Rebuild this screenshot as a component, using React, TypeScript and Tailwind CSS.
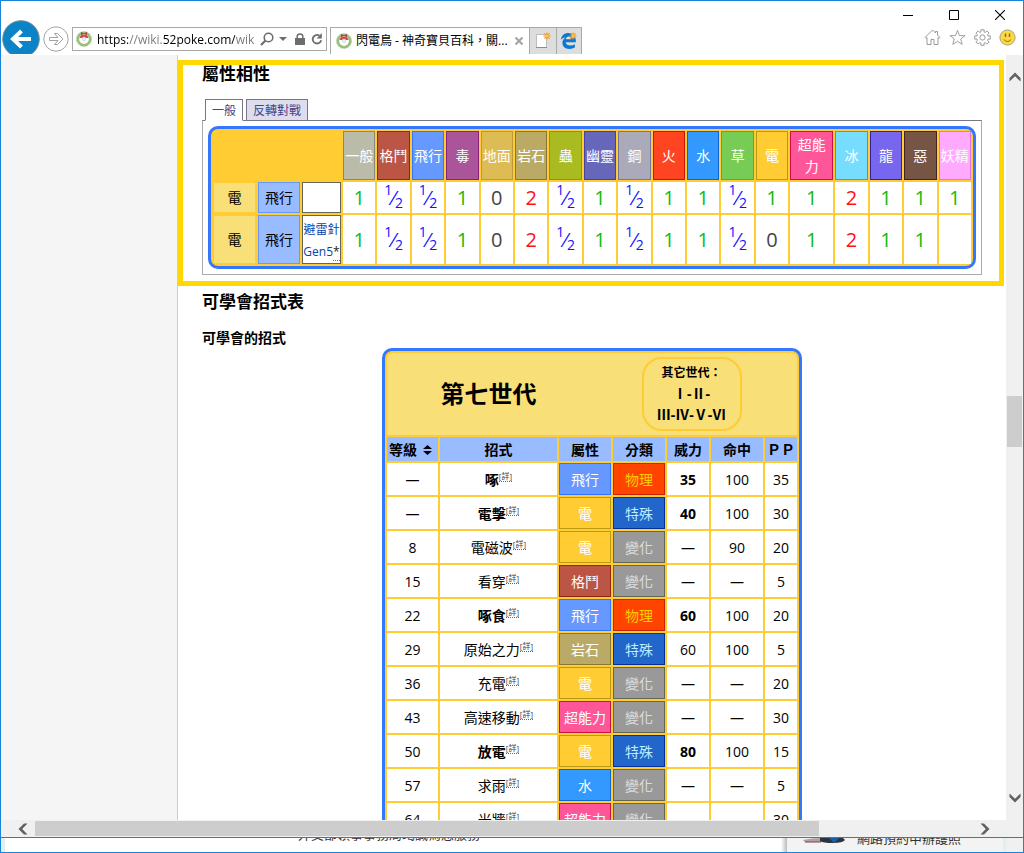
import React, { useState } from 'react'
import clsx from 'clsx'

const TYPE_STYLES: Record<string, string> = {
  一般: 'bg-[#bbbbaa] border-[#888877]',
  格鬥: 'bg-[#bb5544] border-[#992211]',
  飛行: 'bg-[#6699ff] border-[#3377ff]',
  毒: 'bg-[#aa5599] border-[#882277]',
  地面: 'bg-[#ddbb55] border-[#bb9933]',
  岩石: 'bg-[#bbaa66] border-[#887733]',
  蟲: 'bg-[#aabb22] border-[#889911]',
  幽靈: 'bg-[#6666bb] border-[#444499]',
  鋼: 'bg-[#aaaabb] border-[#777799]',
  火: 'bg-[#ff4422] border-[#cc1100]',
  水: 'bg-[#3399ff] border-[#1166cc]',
  草: 'bg-[#77cc55] border-[#44bb11]',
  電: 'bg-[#ffcc33] border-[#bb9911]',
  超能力: 'bg-[#ff5599] border-[#cc1144]',
  冰: 'bg-[#77ddff] border-[#22aadd]',
  龍: 'bg-[#7766ee] border-[#332299]',
  惡: 'bg-[#775544] border-[#442222]',
  妖精: 'bg-[#ffaaff] border-[#dd77dd]',
}

const CATEGORY_STYLES: Record<string, string> = {
  物理: 'bg-[#ff4400] border-[#cc2200] text-[#ffcc00]',
  特殊: 'bg-[#2266cc] border-[#003399] text-[#bbeeff]',
  變化: 'bg-[#999999] border-[#666655] text-[#dddddd]',
}

const TYPES = Object.keys(TYPE_STYLES)

const MATCHUP = ['1', '½', '½', '1', '0', '2', '½', '1', '½', '1', '1', '½', '1', '1', '2', '1', '1', '1']
const MATCHUP_ROD = ['1', '½', '½', '1', '0', '2', '½', '1', '½', '1', '1', '½', '0', '1', '2', '1', '1', '']

interface Move {
  level: string
  name: string
  type: string
  category: string
  power: string
  accuracy: string
  pp: number
  stab?: boolean
}

const MOVES: Move[] = [
  { level: '—', name: '啄', type: '飛行', category: '物理', power: '35', accuracy: '100', pp: 35, stab: true },
  { level: '—', name: '電擊', type: '電', category: '特殊', power: '40', accuracy: '100', pp: 30, stab: true },
  { level: '8', name: '電磁波', type: '電', category: '變化', power: '—', accuracy: '90', pp: 20 },
  { level: '15', name: '看穿', type: '格鬥', category: '變化', power: '—', accuracy: '—', pp: 5 },
  { level: '22', name: '啄食', type: '飛行', category: '物理', power: '60', accuracy: '100', pp: 20, stab: true },
  { level: '29', name: '原始之力', type: '岩石', category: '特殊', power: '60', accuracy: '100', pp: 5 },
  { level: '36', name: '充電', type: '電', category: '變化', power: '—', accuracy: '—', pp: 20 },
  { level: '43', name: '高速移動', type: '超能力', category: '變化', power: '—', accuracy: '—', pp: 30 },
  { level: '50', name: '放電', type: '電', category: '特殊', power: '80', accuracy: '100', pp: 15, stab: true },
  { level: '57', name: '求雨', type: '水', category: '變化', power: '—', accuracy: '—', pp: 5 },
  { level: '64', name: '光牆', type: '超能力', category: '變化', power: '—', accuracy: '—', pp: 30 },
]

// Outline of a cog with eight square teeth
const cogPath = () => {
  const pts: string[] = []
  for (let i = 0; i < 8; i++) {
    const a = (i * Math.PI) / 4
    const corners: [number, number][] = [
      [-0.27, 5.8],
      [-0.21, 7.9],
      [0.21, 7.9],
      [0.27, 5.8],
    ]
    corners.forEach(([d, r]) => {
      pts.push(`${(8.5 + r * Math.cos(a + d)).toFixed(2)} ${(8.5 + r * Math.sin(a + d)).toFixed(2)}`)
    })
  }
  return `M${pts.join('L')}Z`
}

function WreathIcon() {
  return (
    <svg width="16" height="16" viewBox="0 0 16 16" className="shrink-0">
      <circle cx="8" cy="8" r="6.2" fill="#fff" stroke="#97bf7c" strokeWidth="2.6" />
      <circle cx="8" cy="8" r="7.5" fill="none" stroke="#b4d09c" strokeWidth="1" strokeDasharray="2 1.4" />
      <path d="M3.4 6.8Q4.4 3.4 8 3.4T12.600 6.8Q11 7.200 9.800 7A2 2 0 0 0 6.200 7Q5 7.200 3.400 6.800Z" fill="#cf4a4e" />
      <path d="M5 1l3 1.600L11 1v3L8 3 5 4Z" fill="#b8383c" />
      <circle cx="8" cy="8" r="1.5" fill="#fff" stroke="#b9b9b9" strokeWidth=".6" />
    </svg>
  )
}

function Spark({ x, y }: { x: number; y: number }) {
  return (
    <g transform={`translate(${x} ${y})`} stroke="#f29a1f" strokeWidth="1.2">
      <path d="M0-3.6V3.6M-3.6 0H3.6M-2.6-2.6L2.6 2.6M2.6-2.6L-2.6 2.6" />
      <circle r="1.5" fill="#ffc65c" stroke="none" />
    </g>
  )
}

function Chevron({ rotate, className }: { rotate: string; className?: string }) {
  return (
    <svg width="12" height="12" viewBox="0 0 12 12" className={clsx(rotate, className)}>
      <path d="M0.5 7L6 1.5 11.5 7V10.5L6 5.2 0.5 10.5Z" fill="#606060" />
    </svg>
  )
}

function BrowserBar() {
  const [url, setUrl] = useState('https://wiki.52poke.com/wik')

  return (
    <header className="flex h-[54px] shrink-0 gap-[3px] pb-px pl-px">
      <div className="flex items-end gap-[3px]">
        <button aria-label="Back">
          <svg width="38" height="34" viewBox="0 0 38 34" className="block">
            <circle cx="19" cy="19" r="18.3" fill="#0a84c6" stroke="#7d8a92" strokeWidth="1" />
            <path d="M29 19H12M19.5 11L11 19l8.500 8" fill="none" stroke="#fff" strokeWidth="4" />
          </svg>
        </button>
        <button aria-label="Forward" className="mb-0.5">
          <svg width="26" height="26" viewBox="0 0 26 26" className="block" fill="#fff" stroke="#a3a3a3">
            <circle cx="13" cy="13" r="12.2" />
            <path d="M6.500 11.500H15L11.500 7.500H14.500L20 13l-5.500 5.500H11.500L15 14.500H6.500Z" />
          </svg>
        </button>
      </div>

      <div className="flex flex-1 flex-col">
        {/* Window controls */}
        <div className="flex h-[26px] justify-end pt-0.5">
          <button aria-label="Minimize" className="flex w-[46px] items-center justify-center">
            <svg width="10" height="10" viewBox="0 0 10 10"><path d="M0 5.500H10" stroke="#000" /></svg>
          </button>
          <button aria-label="Maximize" className="flex w-[46px] items-center justify-center">
            <svg width="10" height="10" viewBox="0 0 10 10"><path d="M.5.5h9v9h-9Z" fill="none" stroke="#000" /></svg>
          </button>
          <button aria-label="Close" className="flex w-[46px] items-center justify-center">
            <svg width="10" height="10" viewBox="0 0 10 10"><path d="M0 0L10 10M10 0L0 10" stroke="#000" strokeWidth="1.100" /></svg>
          </button>
        </div>

        <div className="flex flex-1 items-start gap-[3px]">
          {/* Address */}
          <div className="flex h-6 w-[255px] items-center border border-[#a9a9a9] px-[3px]">
            <WreathIcon />
            <input
              aria-label="Address"
              value={url}
              onChange={(e) => setUrl(e.target.value)}
              className="ml-[5px] w-[164px] bg-[linear-gradient(90deg,#000_31px,#777_31px_65px,#000_65px_138px,#777_138px)] bg-clip-text pt-px text-[12px] text-transparent outline-none"
            />
            <button aria-label="Search">
              <svg width="14" height="14" viewBox="0 0 14 14" fill="none" stroke="#6d6d6d">
                <circle cx="8.500" cy="5.500" r="4.300" strokeWidth="1.600" />
                <path d="M5.500 8.500L1 13" strokeWidth="2.200" />
              </svg>
            </button>
            <button aria-label="Suggestions" className="ml-[5px]">
              <svg width="8" height="4" viewBox="0 0 8 4"><path d="M0 0H8L4 4Z" fill="#6d6d6d" /></svg>
            </button>
            <button aria-label="Security" className="ml-2">
              <svg width="10" height="12" viewBox="0 0 10 12">
                <path d="M2.200 6V3.500a2.800 2.500 0 0 1 5.600 0V6" fill="none" stroke="#6d6d6d" strokeWidth="1.500" />
                <path d="M0 5H10V12H0Z" fill="#6d6d6d" />
              </svg>
            </button>
            <button aria-label="Refresh" className="ml-1.5">
              <svg width="12" height="12" viewBox="0 0 12 12">
                <path d="M10.200 7.200A4.300 4.300 0 1 1 8.400 2.600" fill="none" stroke="#6d6d6d" strokeWidth="1.800" />
                <path d="M10.800 0V5.400H5.600Z" fill="#6d6d6d" />
              </svg>
            </button>
          </div>

          {/* Tabs */}
          <div className="flex h-[27px]">
            <div className="flex w-[199px] items-center border-l border-t border-[#a9a9a9] pl-[5px] pr-[5px]">
              <WreathIcon />
              <span className="ml-1 flex-1 whitespace-nowrap text-[12px]">閃電鳥 - 神奇寶貝百科，關...</span>
              <button aria-label="Close tab">
                <svg width="10" height="10" viewBox="0 0 10 10"><path d="M1.500 1.500l7 7M8.500 1.500l-7 7" stroke="#a3a3a3" strokeWidth="2" /></svg>
              </button>
            </div>
            <button aria-label="New tab" className="w-[27px] border-l border-t border-[#a9a9a9] bg-[#dddddd] pl-1">
              <svg width="18" height="18" viewBox="0 0 18 18">
                <path d="M2.500 2.500H12.500V15.500H2.500Z" fill="#fff" stroke="#bdbdbd" />
                <path d="M2 15.500H13" stroke="#8d8d8d" />
                <Spark x={13} y={4} />
              </svg>
            </button>
            <button aria-label="Open in Edge" className="w-[26px] border-x border-t border-[#a9a9a9] bg-[#dddddd] pl-[3px]">
              <svg width="18" height="18" viewBox="0 0 18 18">
                <path
                  d="M.8 7.800C1.400 3.600 4.400 1 8.300 1c4.600 0 7.500 3.300 7.500 7.400v1.800H5.800c.2 2.200 2.200 3.200 4.600 3.200 1.700 0 3.200-.4 4.500-1.200v3.400c-1.500.9-3.400 1.300-5.500 1.300C5 16.900 2.400 14.200 2.400 11c0-2.400 1.200-4.500 3.300-5.600C3.500 5.600 1.800 6.600.8 7.800ZM5.900 7.300h5.400c0-1.800-1-2.900-2.600-2.900S6.100 5.600 5.900 7.300Z"
                  fill="#0b78d4"
                />
                <Spark x={13} y={4} />
              </svg>
            </button>
          </div>

          {/* Toolbar */}
          <div className="ml-auto mt-0.5 flex items-center gap-2 pr-[7px]">
            <button aria-label="Home">
              <svg width="17" height="17" viewBox="0 0 17 17" fill="none" stroke="#9a9a9a">
                <path d="M8.500 1L1 8.500 2 9.500 3 8.600V15.500H7V10.500H10V15.500H14V8.600L15 9.500 16 8.500 13.500 6V2.500H11.500V4Z" />
              </svg>
            </button>
            <button aria-label="Favorites">
              <svg width="17" height="17" viewBox="0 0 18 17" fill="none" stroke="#9a9a9a">
                <path d="M9 1L11.100 6.500H17L12.400 10.100 14 15.800 9 12.500 4 15.800 5.600 10.100 1 6.500H6.900Z" />
              </svg>
            </button>
            <button aria-label="Tools">
              <svg width="17" height="17" viewBox="0 0 17 17" fill="none" stroke="#9a9a9a">
                <path d={cogPath()} />
                <circle cx="8.500" cy="8.500" r="2.600" />
              </svg>
            </button>
            <button aria-label="Feedback">
              <svg width="17" height="17" viewBox="0 0 17 17">
                <circle cx="8.500" cy="8.500" r="7.600" fill="#ffd83d" stroke="#a8a08a" />
                <path d="M6.500 4.500V8M10.500 4.500V8" stroke="#857022" strokeWidth="1.500" />
                <path d="M4.800 10.500Q8.500 14.500 12.200 10.500" fill="none" stroke="#857022" />
              </svg>
            </button>
          </div>
        </div>
      </div>
    </header>
  )
}

function Half() {
  return (
    <>
      <sup className="-top-2.5 text-[14px]">1</sup>⁄<sub className="text-[14px]">2</sub>
    </>
  )
}

function Effect({ value }: { value: string }) {
  return (
    <td
      className={clsx(
        'whitespace-nowrap bg-white p-0 text-[20px] leading-6',
        value === '1' && 'text-[#11bb11]',
        value === '½' && 'text-[#1111ff]',
        value === '2' && 'text-[#ff1111]',
        value === '0' && 'text-[#444444]'
      )}
    >
      {value === '½' ? <Half /> : value}
    </td>
  )
}

function MatchupTable() {
  return (
    <table className="w-full table-fixed border-separate border-spacing-0.5 rounded-[10px] border-3 border-[#3377ff] bg-[#ffcc33] text-center text-[14px] leading-[22px]">
      <colgroup>
        <col className="w-[43px]" />
        <col className="w-[42px]" />
        <col className="w-[39px]" />
        {TYPES.map((type) => (
          <col key={type} className={type === '超能力' ? 'w-[43px]' : undefined} />
        ))}
      </colgroup>
      <thead>
        <tr className="h-[49px]">
          <td colSpan={3}></td>
          {TYPES.map((type) => (
            <th key={type} className={clsx('border p-0 font-normal text-white', TYPE_STYLES[type])}>
              {type}
            </th>
          ))}
        </tr>
      </thead>
      <tbody>
        <tr className="h-[31px]">
          <td className="border border-[#ffcc33] bg-[#f8df78]">電</td>
          <td className="border border-[#6699ff] bg-[#99bbff]">飛行</td>
          <td className="border border-[#666655] bg-white"></td>
          {MATCHUP.map((value, i) => (
            <Effect key={i} value={value} />
          ))}
        </tr>
        <tr className="h-[49px]">
          <td className="border border-[#ffcc33] bg-[#f8df78]">電</td>
          <td className="border border-[#6699ff] bg-[#99bbff]">飛行</td>
          <td className="whitespace-nowrap border border-[#666655] bg-white p-0 pt-0.5 text-[12px] text-[#0645ad]">
            <a href="#rod" className="block">避雷針</a>
            <a href="#gen5">Gen5</a>
            <span className="border-b border-dotted border-[#666666] text-[#222222]">*</span>
          </td>
          {MATCHUP_ROD.map((value, i) => (
            <Effect key={i} value={value} />
          ))}
        </tr>
      </tbody>
    </table>
  )
}

function MoveTable() {
  return (
    <table className="mx-auto w-[420px] table-fixed border-separate border-spacing-0.5 rounded-[10px] border-3 border-[#3377ff] bg-[#ffcc33] text-center text-[14px] leading-5">
      <colgroup>
        <col className="w-[51px]" />
        <col />
        <col className="w-[52px]" />
        <col className="w-[52px]" />
        <col className="w-[42px]" />
        <col className="w-[52px]" />
        <col className="w-8" />
      </colgroup>
      <thead>
        <tr className="h-[82px]">
          <th colSpan={7} className="rounded-t-md bg-[#f8df78] p-0 pr-1">
            <div className="flex items-center">
              <span className="flex-1 text-[24px]">第七世代</span>
              <div className="flex flex-1 justify-center">
                <div className="h-[74px] w-[100px] rounded-[20px] border-2 border-[#ffcc33] pt-[3px] leading-[21px]">
                  <div className="text-[12px]">其它世代：</div>
                  <div>
                    <a href="#gen1">Ⅰ</a>-<a href="#gen2">Ⅱ</a>-
                  </div>
                  <div className="whitespace-nowrap">
                    <a href="#gen3">Ⅲ</a>-<a href="#gen4">Ⅳ</a>-<a href="#gen5">Ⅴ</a>-<a href="#gen6">Ⅵ</a>
                  </div>
                </div>
              </div>
            </div>
          </th>
        </tr>
        <tr className="h-6 bg-[#99bbff]">
          <th className="p-0 pt-0.5">
            <button className="flex items-center gap-1.5 pl-0.5">
              等級
              <svg width="9" height="10" viewBox="0 0 9 10"><path d="M4.500 0L9 4H0ZM4.500 10L0 6H9Z" fill="#000" /></svg>
            </button>
          </th>
          <th className="p-0 pt-0.5">招式</th>
          <th className="p-0 pt-0.5">屬性</th>
          <th className="p-0 pt-0.5">分類</th>
          <th className="p-0 pt-0.5">威力</th>
          <th className="p-0 pt-0.5">命中</th>
          <th className="p-0 pt-0.5">ＰＰ</th>
        </tr>
      </thead>
      <tbody>
        {MOVES.map((move) => (
          <tr key={move.name} className="h-8 bg-white">
            <td className="p-0 pt-0.5">{move.level}</td>
            <td className={clsx('p-0 pt-0.5', move.stab && 'font-bold')}>
              <a href={`#${move.name}`}>{move.name}</a>
              <sup className="-top-1.5 border-b border-dotted border-[#666666] text-[8px] font-normal text-[#444444]">[詳]</sup>
            </td>
            <td className={clsx('border p-0 pt-0.5 text-white', TYPE_STYLES[move.type])}>{move.type}</td>
            <td className={clsx('border p-0 pt-0.5', CATEGORY_STYLES[move.category])}>{move.category}</td>
            <td className={clsx('p-0 pt-0.5', move.stab && 'font-bold')}>{move.power}</td>
            <td className="p-0 pt-0.5">{move.accuracy}</td>
            <td className="p-0 pt-0.5">{move.pp}</td>
          </tr>
        ))}
      </tbody>
    </table>
  )
}

export default function App() {
  const [tab, setTab] = useState('一般')

  return (
    <div className="flex h-screen flex-col overflow-hidden bg-white font-['Open_Sans','Noto_Sans_CJK_TC',sans-serif] text-black">
      <div className="flex min-h-0 flex-1 flex-col border border-[#1883d7]">
        <BrowserBar />

        <div className="flex min-h-0 flex-1">
          <aside className="w-[177px] shrink-0 border-r border-[#a7d7f9] bg-[#f5f5f5]" />

          <main className="min-w-0 flex-1 overflow-hidden pt-[5px]">
            <section className="mr-0.5 border-5 border-[#ffd800] pb-1.5 pl-[19px] pr-[17px]">
              <h3 className="mb-4 text-[17px] font-bold leading-[18px]">屬性相性</h3>
              <div role="tablist" className="relative -mb-px flex gap-[3px] pl-[3px]">
                {['一般', '反轉對戰'].map((name) => (
                  <button
                    key={name}
                    role="tab"
                    aria-selected={tab === name}
                    onClick={() => setTab(name)}
                    className={clsx(
                      'h-[22px] border border-[#777788] px-1.5 pt-0.5 text-[12px] leading-[18px] text-[#444488]',
                      tab === name ? 'border-b-white bg-white' : 'bg-[#ddddee]'
                    )}
                  >
                    {name}
                  </button>
                ))}
              </div>
              <div className="border border-[#aaaaaa] border-t-[#777788] p-[5px]">
                <MatchupTable />
              </div>
            </section>

            <section className="px-6">
              <h3 className="mt-1 text-[17px] font-bold leading-6">可學會招式表</h3>
              <h4 className="mt-3.5 text-[14px] font-bold leading-5">可學會的招式</h4>
              <MoveTable />
            </section>
          </main>

          {/* Vertical scrollbar */}
          <div className="flex w-[17px] shrink-0 flex-col items-center bg-[#f0f0f0] pb-4 pt-4">
            <Chevron rotate="rotate-0" />
            <div className="mt-[313px] h-[51px] w-[15px] bg-[#cdcdcd]" />
            <Chevron rotate="rotate-180" className="mt-auto" />
          </div>
        </div>

        {/* Horizontal scrollbar */}
        <div className="flex h-[17px] shrink-0 items-center bg-[#f0f0f0] pl-4 pr-8">
          <Chevron rotate="-rotate-90" />
          <div className="ml-1.5 h-[15px] w-[784px] bg-[#cdcdcd]" />
          <Chevron rotate="rotate-90" className="ml-auto" />
        </div>
      </div>

      {/* Window behind */}
      <footer className="flex h-[15px] shrink-0 overflow-hidden border-x border-b border-[#1883d7] text-[13px] leading-4 text-[#333333]">
        <div className="w-1 bg-[#e0f0f2]" />
        <div className="flex-1 pl-[293px]">
          <p className="-mt-3">外交部領事事務局竭誠為您服務</p>
        </div>
        <div className="w-1.5 bg-linear-to-r from-white to-[#bbbbbb]" />
        <div className="flex w-[216px] bg-[#f3f3f3] pl-4">
          <svg width="42" height="6" viewBox="0 0 42 6">
            <path d="M0 2Q8 0 18 0V4H2Z" fill="#a9a4a6" />
            <path d="M2 4H18" stroke="#8d3b40" />
            <path d="M17 0H40L42 2Q40 5 30 5T17 3Z" fill="#2b3440" />
            <path d="M26 0H36L31 5Z" fill="#1c5fa8" />
          </svg>
          <p className="-mt-2 ml-3">網路預約申辦護照</p>
        </div>
        <div className="w-[3px] bg-[#e0f0f2]" />
        <div className="w-[17px] bg-[#f0f0f0]" />
      </footer>
    </div>
  )
}
